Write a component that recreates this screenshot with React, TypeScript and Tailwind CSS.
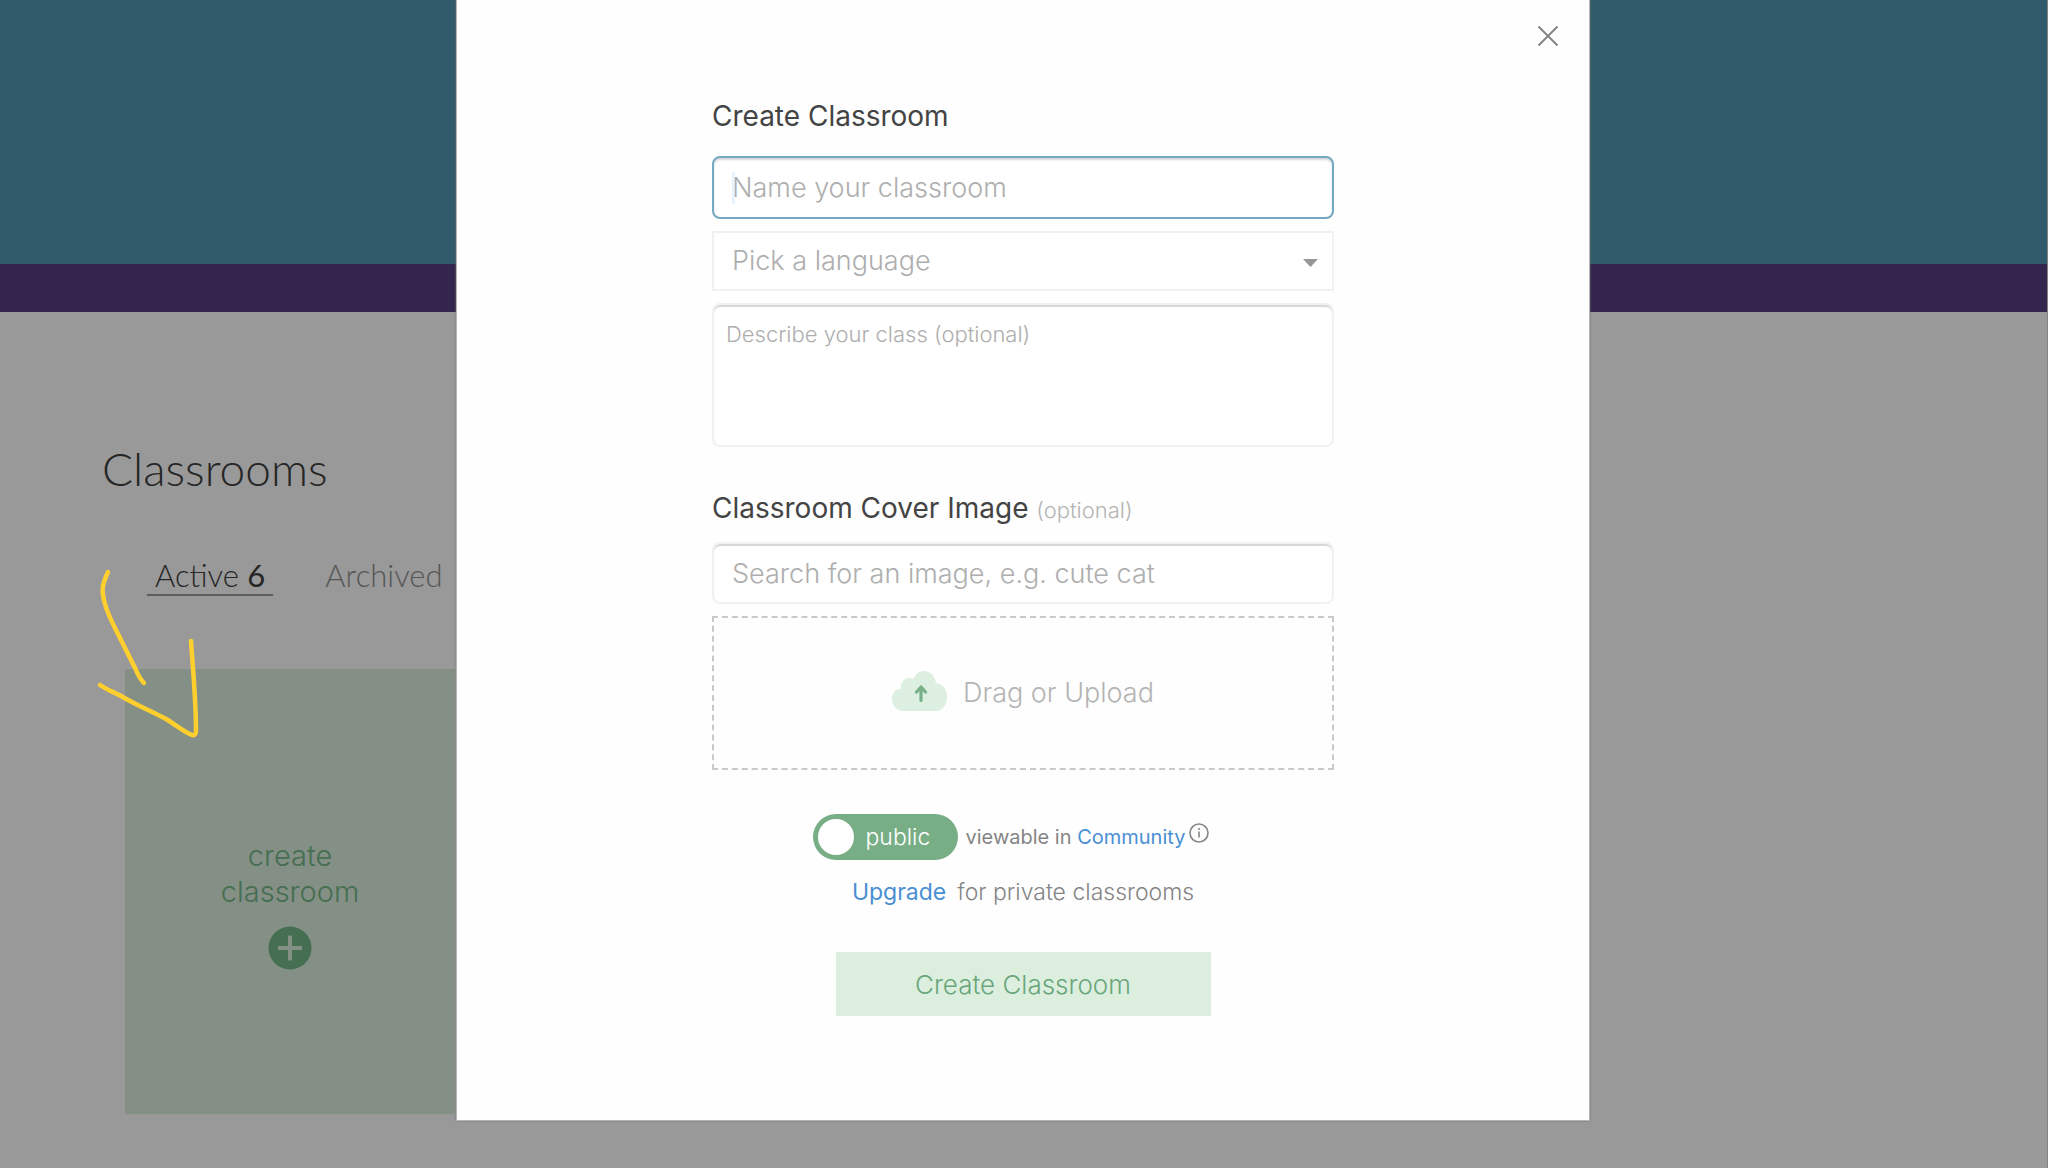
import React from "react";

const fieldClass =
  "block w-full rounded-lg border-2 border-[#f1f1f1] bg-white text-[#555] placeholder:text-[#aeaeae] outline-none shadow-[inset_0_2px_1px_#d6d6d6]";

function CloudIcon() {
  return (
    <svg className="mb-1" width="55" height="40" viewBox="0 0 55 40" aria-hidden="true">
      <path
        d="M9 40C3 38 0 33 0 28C0 22 3 18 9 18C8 12 12 7 17 7C19 7 20 7 22 8C23 3 27 0 32 0C38 0 43 5 44 12C51 13 55 19 55 26C55 32 52 38 46 40Z"
        fill="#dcefe0"
      />
      <path
        d="M29 29.500V16M24.500 21L29 16L33.500 21"
        fill="none"
        stroke="#78b087"
        strokeWidth="3.200"
        strokeLinecap="round"
        strokeLinejoin="round"
      />
    </svg>
  );
}

function HandDrawnArrow() {
  return (
    <svg
      className="pointer-events-none absolute left-[96px] top-[566px]"
      width="108"
      height="176"
      viewBox="96 566 108 176"
      fill="none"
      stroke="#ffd02d"
      strokeWidth="4.500"
      strokeLinecap="round"
      strokeLinejoin="round"
      aria-hidden="true"
    >
      <path d="M108 572C102 585 101 590 105 604C108 615 113 624 118 634L136 670C138 675 141 680 144 683" />
      <path d="M100 685C107 690 114 692 121 696C136 705 151 711 166 719C176 725 184 732 192 735Q196 736 196 731C196 700 193 670 191 641" />
    </svg>
  );
}

function ClassroomsPage() {
  return (
    <div className="min-h-screen border-r border-[#ddd] bg-white font-['Lato',sans-serif]">
      <div className="h-[264px] bg-[#5296b2]" />
      <div className="h-12 bg-[#553f80]" />
      <main className="px-[102px] pt-[130px]">
        <h1 className="text-[46px] font-light leading-[54px] text-[#404040]">Classrooms</h1>
        <nav className="ml-[45px] mt-[60px] flex gap-[44px] text-[31px] font-light leading-[38px]">
          <a href="#active" className="border-b-2 border-[#999] px-2 text-[#404040]">
            Active <span className="font-normal">6</span>
          </a>
          <a href="#archived" className="px-2 text-[#909090]">
            Archived
          </a>
        </nav>
        <button
          type="button"
          className="ml-[23px] mt-[73px] flex h-[445px] w-[330px] flex-col items-center justify-center bg-[#dcf0df] pt-6 font-['Inter',sans-serif] text-[29px] font-light leading-9 text-[#75b787]"
        >
          <span>create</span>
          <span>classroom</span>
          <svg className="mt-4" width="44" height="44" viewBox="0 0 44 44" aria-hidden="true">
            <circle cx="22" cy="22" r="21.500" fill="#75b787" />
            <path d="M22 9.500V34.500M10 22H34" stroke="#dcf0df" strokeWidth="4" />
          </svg>
        </button>
      </main>
    </div>
  );
}

export default function App(): React.ReactNode {
  const [isPublic, setIsPublic] = React.useState(true);

  return (
    <div className="relative min-h-screen overflow-hidden">
      <ClassroomsPage />
      <div className="absolute inset-0 flex items-start justify-center bg-black/40 pr-0.5 font-['Inter',sans-serif]">
        <div
          role="dialog"
          aria-labelledby="dialog-title"
          className="relative w-full max-w-[1134px] border border-t-0 border-[#b5b5b5] bg-[#fefefe] px-6 pb-[104px] pt-24 shadow-[0_0_2px_#777]"
        >
          <button type="button" aria-label="Close" className="absolute right-[30px] top-[25px]">
            <svg width="22" height="22" viewBox="0 0 22 22" stroke="#808080" strokeWidth="1.800">
              <path d="M1.500 1.500L20.500 20.500M20.500 1.500L1.500 20.500" />
            </svg>
          </button>
          <form className="mx-auto w-full max-w-[622px]">
            <h2 id="dialog-title" className="text-[28px] leading-10 text-[#444]">
              Create Classroom
            </h2>
            <div className="relative mt-5">
              <input
                type="text"
                aria-label="Name your classroom"
                placeholder="Name your classroom"
                className="block h-[63px] w-full rounded-lg border-2 border-[#73a9c0] bg-white px-[18px] text-[27px] font-light text-[#555] outline-none placeholder:text-[#aeaeae] shadow-[inset_0_2px_2px_#d6d6d6]"
              />
              <span className="pointer-events-none absolute left-5 top-4 h-8 w-[3px] bg-[#d6eafc]/60" />
            </div>
            <div className="relative mt-3">
              <select
                aria-label="Pick a language"
                className="block h-[60px] w-full appearance-none border-2 border-[#f1f1f1] bg-white px-[18px] text-[27px] font-light text-[#aeaeae] outline-none"
              >
                <option>Pick a language</option>
              </select>
              <svg
                className="pointer-events-none absolute right-4 top-7"
                width="15"
                height="8"
                viewBox="0 0 15 8"
                aria-hidden="true"
              >
                <path d="M0 0H15L7.500 8Z" fill="#969696" />
              </svg>
            </div>
            <textarea
              aria-label="Describe your class"
              placeholder="Describe your class (optional)"
              className={`${fieldClass} mt-3 h-[144px] resize-none px-3 py-[13px] text-[22px] font-light leading-8`}
            />
            <h2 className="mt-[41px] text-[28px] leading-10 text-[#444]">
              <label htmlFor="cover">Classroom Cover Image</label>{" "}
              <span className="text-[22px] font-light text-[#b4b4b4]">(optional)</span>
            </h2>
            <input
              id="cover"
              type="text"
              placeholder="Search for an image, e.g. cute cat"
              className={`${fieldClass} mt-3 h-[62px] px-[18px] text-[27px] font-light`}
            />
            <button
              type="button"
              className="mt-3 flex h-[154px] w-full items-center justify-center gap-4 border-2 border-dashed border-[#c9c9c9] text-[27px] font-light text-[#b4b4b4]"
            >
              <CloudIcon />
              Drag or Upload
            </button>
            <div className="mt-11 flex items-center justify-center gap-2 pr-6 text-[20px] text-[#858585]">
              <label className="relative flex h-[46px] w-[145px] cursor-pointer items-center rounded-full bg-[#78ae86] text-[23px] font-light text-white">
                <input
                  type="checkbox"
                  checked={isPublic}
                  onChange={(e) => setIsPublic(e.target.checked)}
                  className="ml-[5px] mr-3 size-9 appearance-none rounded-full bg-white"
                />
                public
              </label>
              <span>
                viewable in{" "}
                <a href="#community" className="text-[#4a8fd3]">
                  Community
                </a>
              </span>
              <svg
                className="mb-2 -ml-1"
                width="20"
                height="20"
                viewBox="0 0 20 20"
                fill="none"
                stroke="#858585"
                strokeWidth="1.600"
                aria-hidden="true"
              >
                <circle cx="10" cy="10" r="9" />
                <path d="M10 8.500V14.500M10 5V7" />
              </svg>
            </div>
            <p className="mt-4 flex justify-center gap-[11px] text-[23px] leading-8 text-[#858585]">
              <a href="#upgrade" className="text-[#4a8fd3]">
                Upgrade
              </a>
              <span className="font-light">for private classrooms</span>
            </p>
            <button
              type="button"
              className="mx-auto mt-11 block h-[64px] w-[375px] bg-[#dcefdf] text-[26px] font-light text-[#6aa67b]"
            >
              Create Classroom
            </button>
          </form>
        </div>
      </div>
      <HandDrawnArrow />
    </div>
  );
}
